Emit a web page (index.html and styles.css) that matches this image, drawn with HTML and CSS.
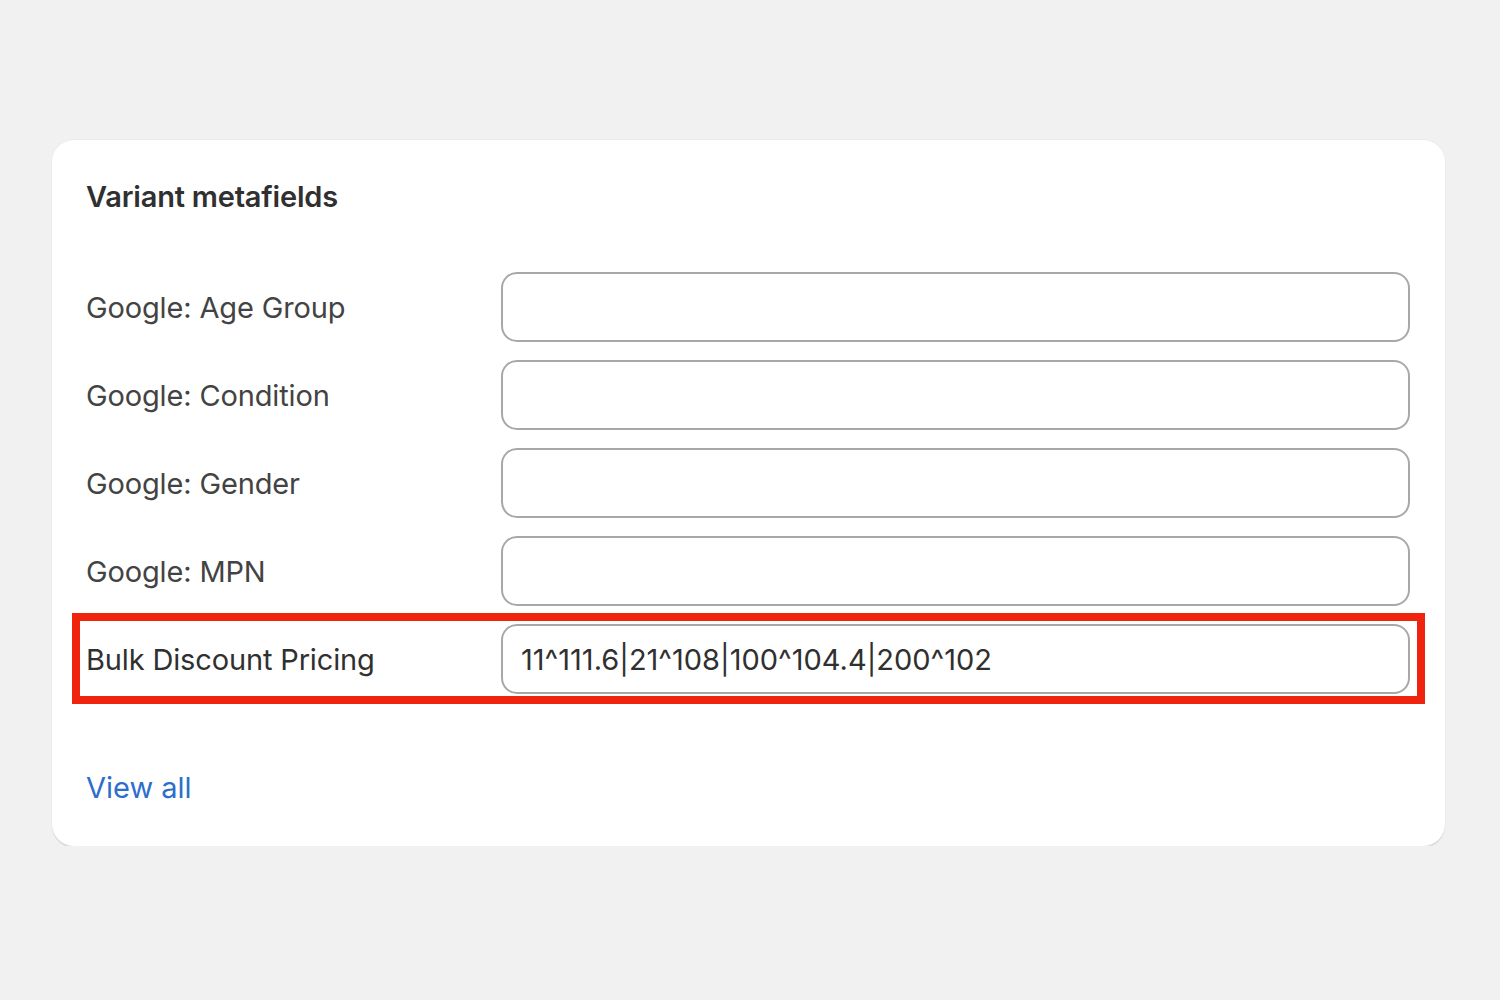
FILE: index.html
```html
<!DOCTYPE html>
<html>
<head>
<meta charset="utf-8">
<link rel="stylesheet" href="styles.css">
</head>
<body>
<div class="page">
  <section class="card">
    <h2 class="title">Variant metafields</h2>
    <div class="rows">
      <div class="row"><span class="label">Google: Age Group</span><div class="input"></div></div>
      <div class="row"><span class="label">Google: Condition</span><div class="input"></div></div>
      <div class="row"><span class="label">Google: Gender</span><div class="input"></div></div>
      <div class="row"><span class="label">Google: MPN</span><div class="input"></div></div>
      <div class="row highlight"><span class="label label-dark">Bulk Discount Pricing</span><div class="input">11^111.6|21^108|100^104.4|200^102</div></div>
    </div>
    <a class="view-all" href="#">View all</a>
  </section>
</div>
</body>
</html>
```
FILE: styles.css
```css
html, body {
  margin: 0;
  padding: 0;
  background: #f1f1f1;
  font-family: Inter, "Noto Sans", "Liberation Sans", sans-serif;
}
.page {
  padding: 140px 55px 0 52px;
}
.card {
  background: #ffffff;
  border-radius: 22px;
  box-shadow: 0 2px 0 #dcdcdc, 0 0 0 1px #ececec;
  padding: 37px 35px 38px 34px;
  display: flex;
  flex-direction: column;
}
.title {
  margin: 0;
  font-size: 29px;
  line-height: 40px;
  font-weight: 600;
  color: #303030;
  letter-spacing: -0.2px;
}
.rows {
  margin-top: 55px;
  display: flex;
  flex-direction: column;
  gap: 18px;
}
.row {
  display: grid;
  grid-template-columns: 415px 1fr;
  align-items: center;
  position: relative;
}
.label {
  font-size: 29px;
  color: #434343;
  letter-spacing: -0.15px;
}
.label-dark {
  color: #303030;
}
.input {
  height: 66px;
  border: 2px solid #a8a8a8;
  border-radius: 16px;
  box-sizing: content-box;
  display: flex;
  align-items: center;
  padding: 0 18px;
  font-size: 29px;
  color: #303030;
  letter-spacing: 0;
}
.highlight::after {
  content: "";
  position: absolute;
  left: -14px;
  right: -15px;
  top: -11px;
  bottom: -10px;
  border: 8px solid #f0230f;
  pointer-events: none;
}
.view-all {
  margin-top: 74px;
  font-size: 29px;
  line-height: 40px;
  color: #2c6ecb;
  text-decoration: none;
  align-self: flex-start;
}
```
